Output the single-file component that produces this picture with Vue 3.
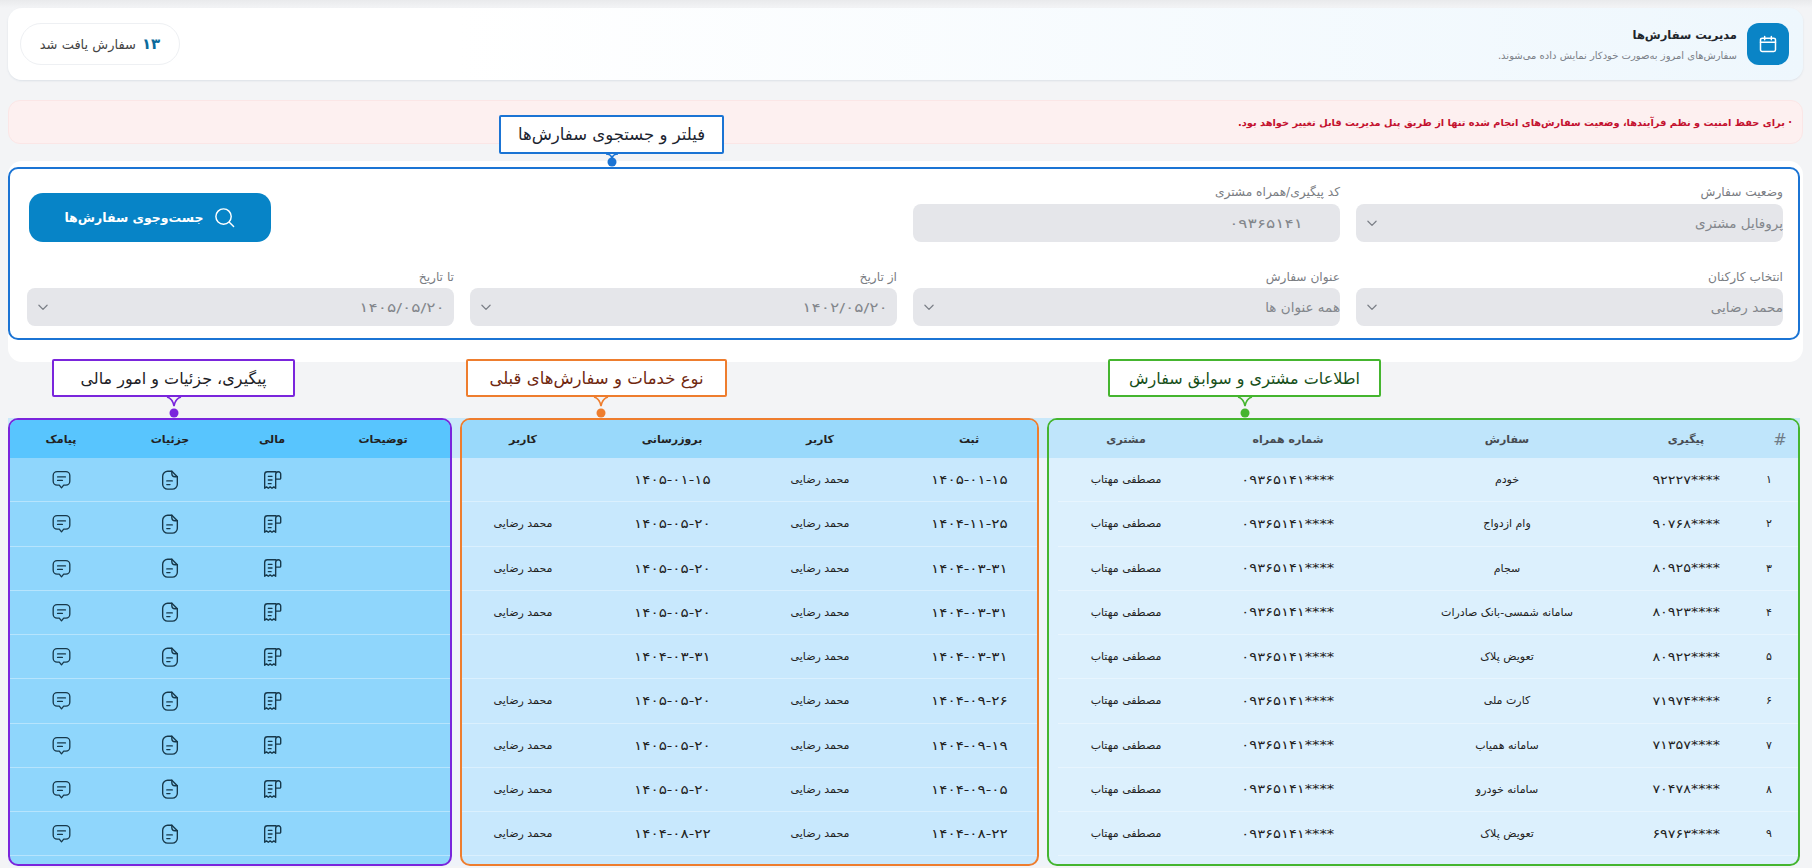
<script setup>
const row1 = [
  { label: "وضعیت سفارش", value: "پروفایل مشتری", kind: "flush", chevron: true },
  { label: "کد پیگیری/همراه مشتری", value: "۰۹۳۶۵۱۴۱", kind: "phone" },
]
const row2 = [
  { label: "انتخاب کارکنان", value: "محمد رضایی", kind: "flush", chevron: true },
  { label: "عنوان سفارش", value: "همه عنوان ها", kind: "flush", chevron: true },
  { label: "از تاریخ", value: "۱۴۰۲/۰۵/۲۰", kind: "date", chevron: true },
  { label: "تا تاریخ", value: "۱۴۰۵/۰۵/۲۰", kind: "date", chevron: true },
]
const user = "محمد رضایی"
const customer = "مصطفی مهتاب"
const phone = "****۰۹۳۶۵۱۴۱"
const orders = [
  ["۱", "****۹۲۲۲۷", "خودم", "۱۴۰۵-۰۱-۱۵", "۱۴۰۵-۰۱-۱۵", ""],
  ["۲", "****۹۰۷۶۸", "وام ازدواج", "۱۴۰۴-۱۱-۲۵", "۱۴۰۵-۰۵-۲۰", user],
  ["۳", "****۸۰۹۲۵", "سجام", "۱۴۰۴-۰۳-۳۱", "۱۴۰۵-۰۵-۲۰", user],
  ["۴", "****۸۰۹۲۳", "سامانه شمسی-بانک صادرات", "۱۴۰۴-۰۳-۳۱", "۱۴۰۵-۰۵-۲۰", user],
  ["۵", "****۸۰۹۲۲", "تعویض پلاک", "۱۴۰۴-۰۳-۳۱", "۱۴۰۴-۰۳-۳۱", ""],
  ["۶", "****۷۱۹۷۴", "کارت ملی", "۱۴۰۴-۰۹-۲۶", "۱۴۰۵-۰۵-۲۰", user],
  ["۷", "****۷۱۳۵۷", "سامانه همیاب", "۱۴۰۴-۰۹-۱۹", "۱۴۰۵-۰۵-۲۰", user],
  ["۸", "****۷۰۴۷۸", "سامانه خودرو", "۱۴۰۴-۰۹-۰۵", "۱۴۰۵-۰۵-۲۰", user],
  ["۹", "****۶۹۷۶۳", "تعویض پلاک", "۱۴۰۴-۰۸-۲۲", "۱۴۰۴-۰۸-۲۲", user],
]
</script>

<template>
  <div class="page" dir="rtl">
    <header class="head">
      <div class="tile">
        <svg width="20" height="20" viewBox="0 0 24 24" fill="none" stroke="#fff" stroke-width="1.8" stroke-linecap="round" stroke-linejoin="round">
          <rect x="3" y="5" width="18" height="16" rx="2" />
          <path d="M3 10h18M8 3v4M16 3v4" />
        </svg>
      </div>
      <div class="head-text">
        <h1>مدیریت سفارش‌ها</h1>
        <p>سفارش‌های امروز به‌صورت خودکار نمایش داده می‌شوند.</p>
      </div>
      <div class="pill"><b>۱۳</b> سفارش یافت شد</div>
    </header>

    <div class="alert">· برای حفظ امنیت و نظم فرآیندها، وضعیت سفارش‌های انجام شده تنها از طریق پنل مدیریت قابل تغییر خواهد بود.</div>

    <section class="card">
      <div class="filter">
        <div class="tag tag-blue filter-tag">
          فیلتر و جستجوی سفارش‌ها
          <svg class="tail short" width="18" height="14" viewBox="0 0 18 14" fill="none"><path d="M3 0c3 0 5 1 6 4 1-3 3-4 6-4" stroke="currentColor" stroke-width="1.6" /><circle cx="9" cy="8" r="4.5" fill="currentColor" /></svg>
        </div>
        <div class="form">
          <div v-for="f in row1" :key="f.label" class="field">
            <label>{{ f.label }}</label>
            <div class="box" :class="f.kind">
              <span>{{ f.value }}</span>
              <svg v-if="f.chevron" width="14" height="14" viewBox="0 0 24 24" fill="none" stroke="#7c8088" stroke-width="2.2" stroke-linecap="round" stroke-linejoin="round"><path d="M5 9l7 7 7-7" /></svg>
            </div>
          </div>
          <div></div>
          <button class="search" type="button">
            <svg width="23" height="23" viewBox="0 0 24 24" fill="none" stroke="#fff" stroke-width="1.5" stroke-linecap="round"><circle cx="11" cy="11" r="8" /><path d="M17 17l4.5 4.5" /></svg>
            جست‌وجوی سفارش‌ها
          </button>
          <div v-for="f in row2" :key="f.label" class="field lower">
            <label>{{ f.label }}</label>
            <div class="box" :class="f.kind">
              <span>{{ f.value }}</span>
              <svg v-if="f.chevron" width="14" height="14" viewBox="0 0 24 24" fill="none" stroke="#7c8088" stroke-width="2.2" stroke-linecap="round" stroke-linejoin="round"><path d="M5 9l7 7 7-7" /></svg>
            </div>
          </div>
        </div>
      </div>
    </section>

    <div class="tags">
      <div class="tag-cell green-cell">
        <div class="tag tag-green">
          اطلاعات مشتری و سوابق سفارش
          <svg class="tail" width="18" height="22" viewBox="0 0 18 22" fill="none"><path d="M2 0c4 1 6 4 7 9 1-5 3-8 7-9" stroke="currentColor" stroke-width="1.6" /><circle cx="9" cy="16" r="4.5" fill="currentColor" /></svg>
        </div>
      </div>
      <div class="tag-cell orange-cell">
        <div class="tag tag-orange">
          نوع خدمات و سفارش‌های قبلی
          <svg class="tail" width="18" height="22" viewBox="0 0 18 22" fill="none"><path d="M2 0c4 1 6 4 7 9 1-5 3-8 7-9" stroke="currentColor" stroke-width="1.6" /><circle cx="9" cy="16" r="4.5" fill="currentColor" /></svg>
        </div>
      </div>
      <div class="tag-cell purple-cell">
        <div class="tag tag-purple">
          پیگیری، جزئیات و امور مالی
          <svg class="tail" width="18" height="22" viewBox="0 0 18 22" fill="none"><path d="M2 0c4 1 6 4 7 9 1-5 3-8 7-9" stroke="currentColor" stroke-width="1.6" /><circle cx="9" cy="16" r="4.5" fill="currentColor" /></svg>
        </div>
      </div>
    </div>

    <div class="panels">
      <div class="panel green">
        <div class="row th">
          <span class="hash">#</span><span>پیگیری</span><span>سفارش</span><span>شماره همراه</span><span>مشتری</span>
        </div>
        <div v-for="o in orders" :key="o[0]" class="row">
          <span>{{ o[0] }}</span><span class="track">{{ o[1] }}</span><span>{{ o[2] }}</span><span class="mobile">{{ phone }}</span><span>{{ customer }}</span>
        </div>
      </div>

      <div class="panel orange">
        <div class="row th">
          <span>ثبت</span><span>کاربر</span><span>بروزرسانی</span><span>کاربر</span>
        </div>
        <div v-for="o in orders" :key="o[0]" class="row">
          <span class="stamp">{{ o[3] }}</span><span>{{ user }}</span><span class="stamp">{{ o[4] }}</span><span>{{ o[5] }}</span>
        </div>
      </div>

      <div class="panel purple">
        <div class="row th">
          <span>توضیحات</span><span>مالی</span><span>جزئیات</span><span>پیامک</span>
        </div>
        <div v-for="o in orders" :key="o[0]" class="row">
          <span></span>
          <span>
            <svg width="22" height="22" viewBox="0 0 24 24" fill="none" stroke="#17384a" stroke-width="1.5" stroke-linecap="round" stroke-linejoin="round">
              <path d="M16 3H7a3 3 0 0 0-3 3v15l2-1.500L8 21l2-1.500 2 1.500 2-1.500 2 1.500V6a3 3 0 0 1 3-3 2.500 2.500 0 0 1 2.500 2.500V10a1 1 0 0 1-1 1H16" />
              <path d="M8 8h4M8 12h4M8 16h3" />
            </svg>
          </span>
          <span>
            <svg width="22" height="22" viewBox="0 0 24 24" fill="none" stroke="#17384a" stroke-width="1.500" stroke-linecap="round" stroke-linejoin="round">
              <path d="M9.500 2.500h4.500l6 6v8a5.500 5.500 0 0 1-5.500 5.500h-5A5.500 5.500 0 0 1 4 16.500v-8.500a5.500 5.500 0 0 1 5.500-5.500z" />
              <path d="M14 2.500v2.500a3.500 3.500 0 0 0 3.500 3.500H20M8.500 13h6M8.500 17h3.500" />
            </svg>
          </span>
          <span>
            <svg width="21" height="21" viewBox="0 0 24 24" fill="none" stroke="#17384a" stroke-width="1.500" stroke-linecap="round" stroke-linejoin="round">
              <path d="M7 3h10a4.500 4.500 0 0 1 4.500 4.500v6.500a4.500 4.500 0 0 1-4.500 4.500h-2.500L12 21.500l-2.500-3H7A4.500 4.500 0 0 1 2.500 14V7.500A4.500 4.500 0 0 1 7 3z" />
              <path d="M7.500 9h9M7.500 13h5.500" />
            </svg>
          </span>
        </div>
      </div>
    </div>
  </div>
</template>

<style>
html, body { margin: 0; height: 868px; overflow: hidden; background: #f3f4f6; }
</style>

<style scoped>
.page {
  box-sizing: border-box;
  height: 868px;
  padding: 8px 9px 0 8px;
  font-family: "DejaVu Sans", "Noto Sans", sans-serif;
  background: linear-gradient(#e9eaec, #f3f4f6 8px);
  color: #222;
}
.head {
  display: flex;
  align-items: center;
  gap: 10px;
  height: 72px;
  box-sizing: border-box;
  padding: 0 14px 0 12px;
  border-radius: 14px;
  background: linear-gradient(to left, #eef7fd, #fff 75%);
  box-shadow: 0 1px 2px rgba(150, 170, 190, .25);
}
.tile {
  width: 42px;
  height: 42px;
  border-radius: 12px;
  background: #0a84c6;
  display: flex;
  align-items: center;
  justify-content: center;
}
.head-text { flex: 1; }
.head-text h1 { margin: 0 0 8px; font-size: 11.500px; font-weight: 700; color: #20252b; }
.head-text p { margin: 0; font-size: 10px; color: #7b8088; }
.pill {
  height: 42px;
  width: 160px;
  box-sizing: border-box;
  display: flex;
  align-items: center;
  justify-content: center;
  gap: 6px;
  border: 1px solid #eef0f3;
  border-radius: 21px;
  background: #fff;
  font-size: 13px;
  color: #444;
}
.pill b { color: #0b6a9c; font-size: 15px; }
.alert {
  margin-top: 20px;
  height: 44px;
  box-sizing: border-box;
  padding: 0 10px;
  display: flex;
  align-items: center;
  border: 1px solid #fbe6e6;
  border-radius: 12px;
  background: #fdf0f0;
  color: #c4122f;
  font-size: 9.800px;
  font-weight: 700;
}
.card {
  margin-top: 17px;
  height: 201px;
  box-sizing: border-box;
  padding: 6px 3px 0 0;
  background: #fff;
  border-radius: 14px;
}
.filter {
  position: relative;
  height: 173px;
  box-sizing: border-box;
  border: 2px solid #1b74d4;
  border-radius: 10px;
  padding: 15px 15px 0 17px;
}
.form {
  display: grid;
  grid-template-columns: repeat(4, 1fr);
  column-gap: 16px;
  grid-template-rows: 58px 57px;
  row-gap: 27px;
}
.field label {
  display: block;
  height: 16px;
  line-height: 16px;
  margin-bottom: 4px;
  font-size: 12.200px;
  color: #7a7d83;
}
.lower label { margin-bottom: 3px; }
.box {
  height: 38px;
  box-sizing: border-box;
  padding: 0 9px;
  display: flex;
  align-items: center;
  justify-content: space-between;
  border-radius: 8px;
  background: #e5e6ea;
  font-size: 13.500px;
  color: #83868c;
}
.box.flush { padding-right: 0; }
.box.phone { padding-right: 37px; font-size: 13px; }
.box.date { font-size: 13px; }
.box.phone span, .box.date span { transform: scaleX(1.32); transform-origin: right center; }
.search {
  justify-self: end;
  align-self: end;
  margin-left: 2px;
  width: 242px;
  height: 49px;
  display: flex;
  align-items: center;
  justify-content: center;
  gap: 9px;
  border: 0;
  border-radius: 14px;
  background: #0784c7;
  color: #fff;
  font: 700 12.500px "DejaVu Sans", sans-serif;
}
.tag {
  position: relative;
  box-sizing: border-box;
  height: 38px;
  display: flex;
  align-items: center;
  justify-content: center;
  background: #fff;
  border: 2px solid currentColor;
  border-radius: 2px;
  font-size: 16px;
}
.tail { position: absolute; top: 36px; left: 50%; margin-left: -9px; }
.tail.short { top: 37px; }
.filter-tag { position: absolute; top: -54px; right: 1074px; width: 225px; height: 39px; color: #1b74d4; -webkit-text-fill-color: #1c2430; font-size: 16.500px; }
.tag-green { width: 273px; color: #45b52f; -webkit-text-fill-color: #17501a; }
.tag-orange { width: 261px; color: #ee7d2e; -webkit-text-fill-color: #70280f; font-size: 16.500px; }
.tag-orange .tail { margin-left: -5px; }
.tag-purple { width: 243px; color: #7a25dc; -webkit-text-fill-color: #1d1d26; }
.tags {
  margin-top: -3px;
  height: 59px;
  display: flex;
  gap: 8px;
  padding-right: 3px;
}
.green-cell { width: 753px; padding-right: 419px; box-sizing: border-box; }
.orange-cell { width: 579px; padding-right: 312px; box-sizing: border-box; }
.purple-cell { width: 444px; padding-right: 157px; box-sizing: border-box; }
.panels {
  height: 448px;
  display: flex;
  gap: 8px;
  margin-right: 3px;
  background: linear-gradient(#c9e8fa 40px, #eff3f9 40px);
}
.panel {
  box-sizing: border-box;
  border: 2px solid;
  border-radius: 10px;
  overflow: hidden;
}
.row {
  display: grid;
  align-items: center;
  justify-items: center;
  height: 44.250px;
  box-sizing: border-box;
  border-bottom: 1px solid rgba(255, 255, 255, .35);
  font-size: 11px;
}
.row span { display: flex; align-items: center; }
.row.th { height: 38px; border: 0; font-weight: 700; }
.track { font-size: 12px; transform: scaleX(1.2); }
.mobile { font-size: 12px; transform: scaleX(1.23); }
.stamp { font-size: 12.500px; transform: scaleX(1.22); }
.green { width: 753px; border-color: #45b52f; background: #dcf0fd; padding-left: 9px; }
.green .row { grid-template-columns: 58px 108px 250px 188px 136px; }
.green .th { background: #bfe5fb; margin-left: -9px; padding-left: 9px; color: #474c52; }
.orange { width: 579px; border-color: #ee7d2e; background: #c8e8fd; }
.orange .row { grid-template-columns: 136px 162px 134px 143px; }
.orange .row span:last-child { padding-right: 21px; }
.orange .th { background: #99d9fb; }
.purple { width: 444px; border-color: #7a25dc; background: #8fd6fc; }
.purple .row { grid-template-columns: 134px 88px 116px 102px; }
.purple .th { background: #58c5fe; }
.hash { font-size: 16px; font-weight: 400; color: #6f7b86; margin-right: -22px; }
</style>
